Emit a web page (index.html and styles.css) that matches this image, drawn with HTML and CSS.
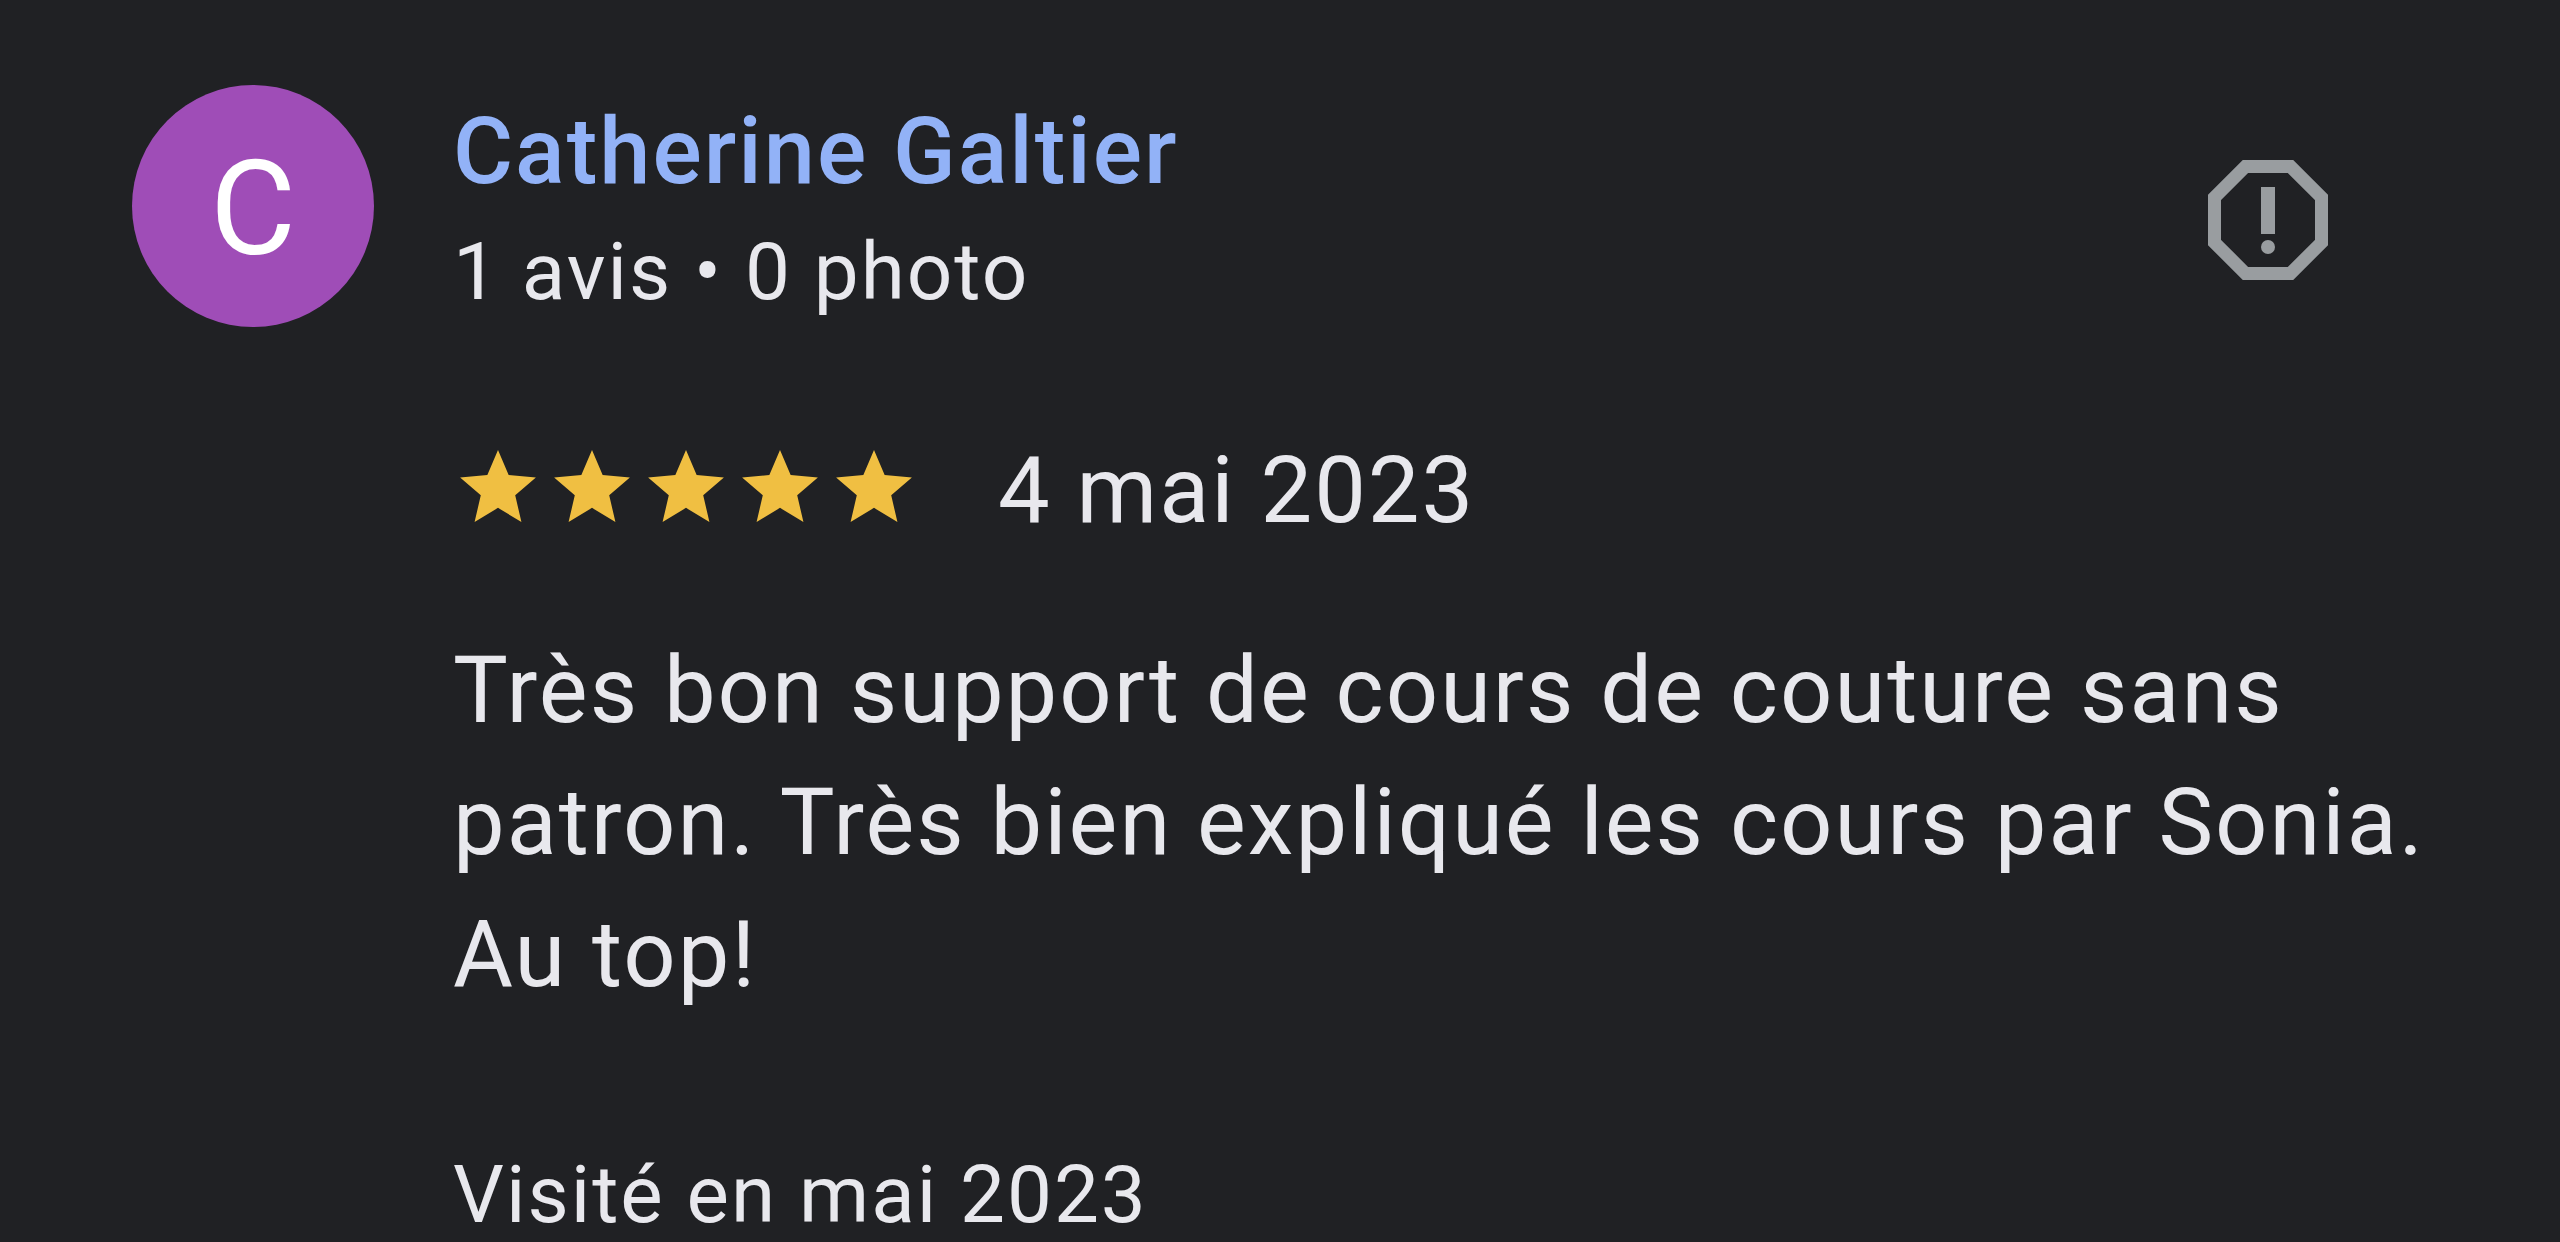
FILE: index.html
```html
<!DOCTYPE html>
<html lang="fr">
<head>
<meta charset="utf-8">
<meta name="viewport" content="width=device-width, initial-scale=1">
<title>Avis de Catherine Galtier</title>
<link rel="stylesheet" href="styles.css">
</head>
<body>
<article class="review">
  <div class="avatar" aria-hidden="true">C</div>
  <header class="header">
    <div class="author">
      <a class="name" href="#">Catherine Galtier</a>
      <p class="stats">1 avis • 0 photo</p>
    </div>
    <button class="report" type="button" aria-label="Signaler cet avis">
      <svg class="report-icon" viewBox="0 0 120 120" aria-hidden="true">
        <path d="M37.500 6.500H82.500L113.500 37.500V82.500L82.500 113.500H37.500L6.500 82.500V37.500Z" fill="none" stroke="currentColor" stroke-width="13"/>
        <path d="M53 27H67V74H53Z" fill="currentColor"/>
        <circle cx="60" cy="87" r="7" fill="currentColor"/>
      </svg>
    </button>
  </header>
  <div class="content">
    <div class="rating">
      <div class="stars" role="img" aria-label="5 étoiles sur 5">
        <svg class="star" viewBox="2 2 20 19"><path d="M12 17.270 18.180 21l-1.640-7.030L22 9.240l-7.190-.61L12 2 9.190 8.630 2 9.240l5.460 4.730L5.820 21z"/></svg>
        <svg class="star" viewBox="2 2 20 19"><path d="M12 17.270 18.180 21l-1.640-7.030L22 9.240l-7.190-.61L12 2 9.190 8.630 2 9.240l5.460 4.730L5.820 21z"/></svg>
        <svg class="star" viewBox="2 2 20 19"><path d="M12 17.270 18.180 21l-1.640-7.030L22 9.240l-7.190-.61L12 2 9.190 8.630 2 9.240l5.460 4.730L5.820 21z"/></svg>
        <svg class="star" viewBox="2 2 20 19"><path d="M12 17.270 18.180 21l-1.640-7.030L22 9.240l-7.190-.61L12 2 9.190 8.630 2 9.240l5.460 4.730L5.820 21z"/></svg>
        <svg class="star" viewBox="2 2 20 19"><path d="M12 17.270 18.180 21l-1.640-7.030L22 9.240l-7.190-.61L12 2 9.190 8.630 2 9.240l5.460 4.730L5.820 21z"/></svg>
      </div>
      <time class="date" datetime="2023-05-04">4 mai 2023</time>
    </div>
    <p class="text">Très bon support de cours de couture sans patron. Très bien expliqué les cours par Sonia. Au top!</p>
    <p class="visited">Visité en mai 2023</p>
  </div>
</article>
</body>
</html>
```
FILE: styles.css
```css
* {
  box-sizing: border-box;
}

body {
  margin: 0;
  background: #202124;
  color: #e8e8ed;
  font-family: Roboto, sans-serif;
}

p {
  margin: 0;
}

.review {
  display: grid;
  grid-template-columns: 242px minmax(0, 1fr);
  column-gap: 79px;
  padding: 85px 120px 0 132px;
}

.avatar {
  display: flex;
  align-items: center;
  justify-content: center;
  width: 242px;
  height: 242px;
  padding-top: 5px;
  border-radius: 50%;
  background: #9f4db7;
  color: #fff;
  font-size: 132px;
}

.header {
  display: flex;
  justify-content: space-between;
  align-items: flex-start;
  padding-top: 17px;
  padding-right: 112px;
}

.name {
  display: block;
  color: #92b2f7;
  font-size: 92px;
  font-weight: 500;
  line-height: 100px;
  letter-spacing: 2px;
  text-decoration: none;
}

.stats {
  margin-top: 20px;
  font-size: 80px;
  line-height: 100px;
  letter-spacing: 2px;
}

.report {
  margin-top: 58px;
  padding: 0;
  border: 0;
  background: none;
  color: #999da0;
}

.report-icon {
  display: block;
  width: 120px;
  height: 120px;
}

.content {
  grid-column: 2;
}

.rating {
  display: flex;
  align-items: baseline;
  gap: 86px;
  margin-top: 98px;
  padding-left: 7px;
}

.stars {
  display: flex;
  gap: 18px;
}

.star {
  width: 76px;
  height: 72px;
  fill: #f0bf42;
}

.date,
.text {
  font-size: 92px;
  line-height: 132px;
  letter-spacing: 2px;
}

.text {
  margin-top: 68px;
}

.visited {
  margin-top: 124px;
  font-size: 80px;
  line-height: 100px;
  letter-spacing: 2px;
}
```
